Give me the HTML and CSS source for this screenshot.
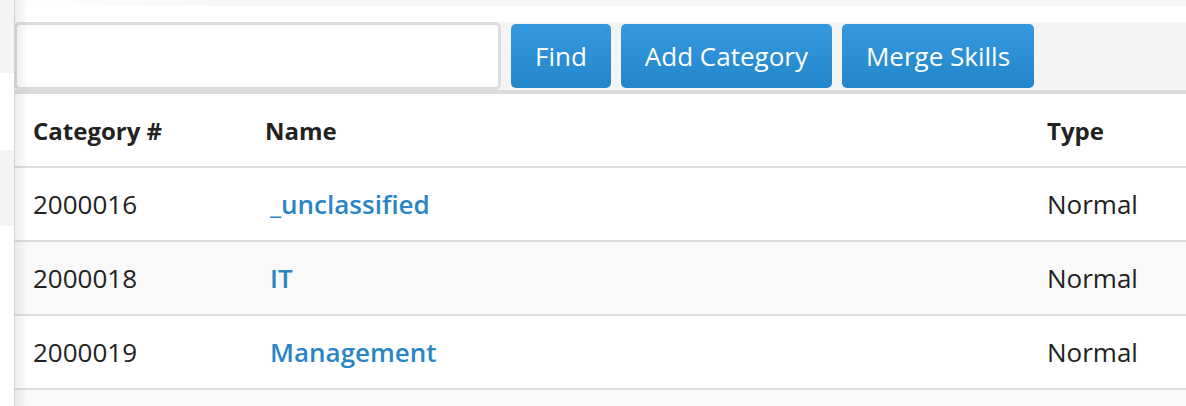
FILE: index.html
```html
<!DOCTYPE html>
<html>
<head>
<meta charset="utf-8">
<link rel="stylesheet" href="styles.css">
</head>
<body>
<div class="page">
  <aside class="sidebar">
    <div class="side-item side-gray h1"></div>
    <div class="side-item h2"></div>
    <div class="side-item side-gray h3"></div>
    <div class="side-item"></div>
  </aside>
  <main class="main">
    <div class="topstrip"></div>
    <div class="toolbar">
      <input class="search" type="text">
      <button class="btn">Find</button>
      <button class="btn">Add Category</button>
      <button class="btn">Merge Skills</button>
    </div>
    <div class="table">
      <div class="row head">
        <div class="cell">Category #</div>
        <div class="cell">Name</div>
        <div class="cell">Type</div>
      </div>
      <div class="row">
        <div class="cell">2000016</div>
        <div class="cell"><a class="link" href="#">_unclassified</a></div>
        <div class="cell">Normal</div>
      </div>
      <div class="row alt">
        <div class="cell">2000018</div>
        <div class="cell"><a class="link" href="#">IT</a></div>
        <div class="cell">Normal</div>
      </div>
      <div class="row">
        <div class="cell">2000019</div>
        <div class="cell"><a class="link" href="#">Management</a></div>
        <div class="cell">Normal</div>
      </div>
      <div class="row alt empty"></div>
    </div>
  </main>
</div>
</body>
</html>
```
FILE: styles.css
```css
html, body {
  margin: 0;
  padding: 0;
  background: #ffffff;
  font-family: "Open Sans", "Liberation Sans", sans-serif;
  color: #222222;
  overflow: hidden;
}

.page {
  display: flex;
  height: 406px;
  overflow: hidden;
}

.sidebar {
  width: 14px;
  flex: none;
  display: flex;
  flex-direction: column;
}

.side-item {
  background: #ffffff;
  flex: none;
}

.side-gray {
  background: #f4f4f4;
}

.h1 { height: 73px; }
.h2 { height: 77px; }
.h3 { height: 76px; }

.main {
  flex: 1;
  position: relative;
  border-left: 1px solid #d4d4d4;
  display: flex;
  flex-direction: column;
  overflow: hidden;
}

.main > * {
  flex: none;
}

.main::before {
  content: "";
  position: absolute;
  left: 0;
  top: 0;
  bottom: 0;
  width: 14px;
  background: linear-gradient(to right, rgba(0, 0, 0, 0.07), rgba(0, 0, 0, 0));
  pointer-events: none;
}

.topstrip {
  height: 6px;
  background: linear-gradient(to right, #ffffff 0, #f6f6f6 220px, #f6f6f6 100%);
  margin-bottom: 16px;
}

.toolbar {
  display: flex;
  align-items: center;
  gap: 10px;
  height: 68px;
  background: #f4f4f4;
  border-bottom: 4px solid #dcdcdc;
}

.search {
  box-sizing: border-box;
  width: 487px;
  height: 68px;
  margin: 0 0 0 -1px;
  border: 3px solid #dcdcdc;
  border-radius: 6px;
  background: #ffffff;
  outline: none;
  font: inherit;
}

.btn {
  height: 64px;
  padding: 0 24px;
  border: none;
  border-radius: 5px;
  background: linear-gradient(to bottom, #3499de, #2286cb);
  color: #ffffff;
  font-family: "Open Sans", "Liberation Sans", sans-serif;
  font-size: 26px;
  font-weight: 400;
  line-height: 64px;
}

.table {
  display: flex;
  flex-direction: column;
}

.row {
  flex: none;
  display: grid;
  grid-template-columns: 232px 782px 1fr;
  height: 72px;
  align-items: center;
  border-bottom: 2px solid #dedede;
  font-size: 26px;
  background: #ffffff;
}

.row.alt {
  background: #f9f9f9;
}

.row.empty {
  border-bottom: none;
}

.row.head {
  font-size: 24px;
  font-weight: 700;
}

.cell {
  padding-left: 18px;
  white-space: nowrap;
}

.link {
  color: #2a85c5;
  font-weight: 600;
  text-decoration: none;
  padding-left: 5px;
}
```
